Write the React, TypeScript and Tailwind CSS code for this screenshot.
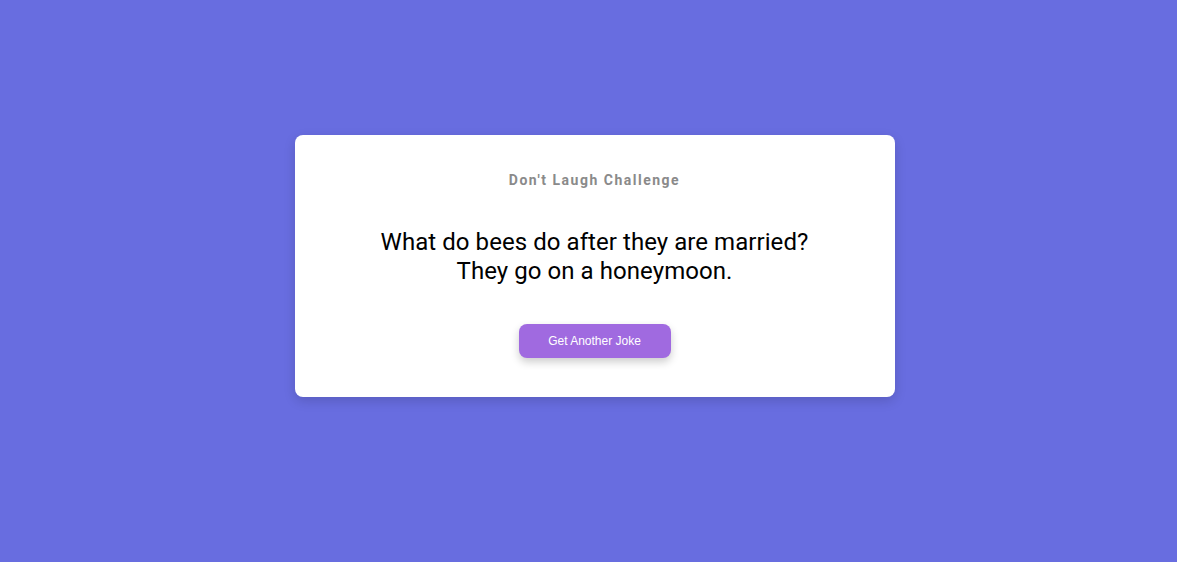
export default function App() {
  return (
    <div className="min-h-screen w-full bg-[#686de0] flex items-center justify-center pl-[12px] pb-[30px]" style={{ fontFamily: "Roboto, sans-serif" }}>
      <div className="w-[600px] h-[262px] bg-white rounded-[8px] shadow-[0_4px_12px_rgba(0,0,0,0.15)] flex flex-col items-center pt-[35px] px-[40px]">
        <h3 className="text-[14px] leading-[20px] font-bold tracking-[1.5px] text-[#8a8a8a] font-['Roboto',sans-serif]">Don't Laugh Challenge</h3>
        <p className="mt-[38px] text-[24px] leading-[29px] text-black text-center tracking-[0.06px] font-['Roboto',sans-serif]">
          What do bees do after they are married?
          <br />
          They go on a honeymoon.
        </p>
        <button className="mt-[38px] w-[152px] h-[34px] rounded-[8px] bg-[#a06ae0] text-white text-[12px] font-['Liberation_Sans',Arial,sans-serif] shadow-[0_4px_8px_rgba(0,0,0,0.2)]">
          Get Another Joke
        </button>
      </div>
    </div>
  );
}
